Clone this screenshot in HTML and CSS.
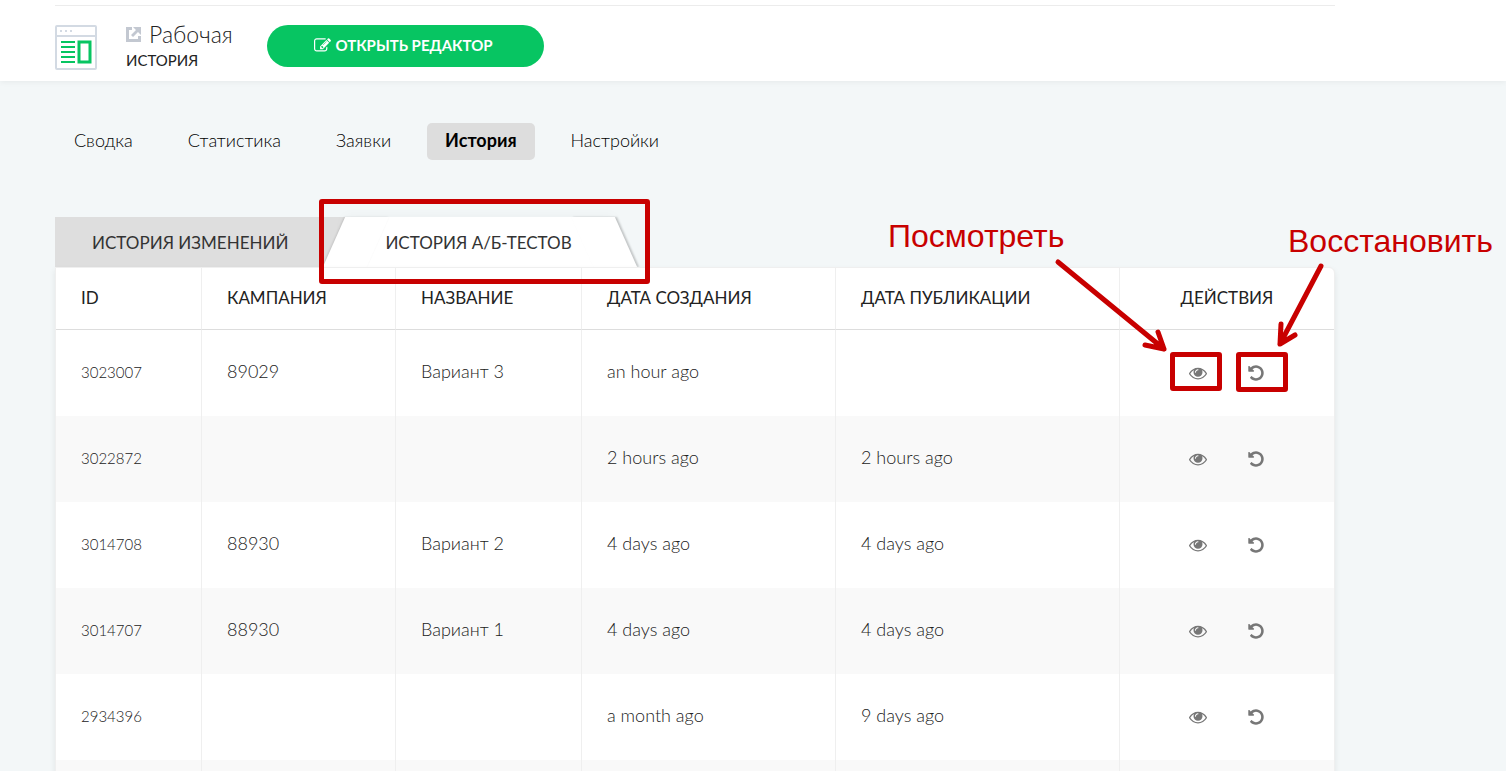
FILE: index.html
```
<!DOCTYPE html>
<html lang="ru">
<head>
    <meta charset="UTF-8">
    <title>История А/Б-тестов</title>
    <link rel="stylesheet" href="styles.css">
</head>
<body>
    <!-- общие иконки -->
    <svg class="sprite" aria-hidden="true">
        <symbol id="icon-eye" viewBox="0 0 1792 1792">
            <path d="M1664 960q-152-236-381-353 61 104 61 225 0 185-131.5 316.5t-316.5 131.5-316.5-131.5-131.5-316.5q0-121 61-225-229 117-381 353 133 205 333.5 326.5t434.5 121.5 434.5-121.5 333.5-326.5zm-720-384q0-20-14-34t-34-14q-125 0-214.5 89.5t-89.5 214.5q0 20 14 34t34 14 34-14 14-34q0-86 61-147t147-61q20 0 34-14t14-34zm848 384q0 34-20 69-140 230-376.5 368.5t-499.5 138.5-499.5-139-376.5-368q-20-35-20-69t20-69q140-229 376.5-368t499.5-139 499.5 139 376.5 368q20 35 20 69z"/>
        </symbol>
        <symbol id="icon-undo" viewBox="0 0 1792 1792">
            <path d="M1664 896q0 156-61 298t-164 245-245 164-298 61q-172 0-327-72.5t-264-204.5q-7-10-6.5-22.5t8.5-20.5l137-138q10-9 25-9 16 2 23 12 73 95 179 147t225 52q104 0 198.5-40.5t163.5-109.5 109.5-163.5 40.5-198.5-40.5-198.5-109.5-163.5-163.5-109.5-198.5-40.5q-98 0-188 35.5t-160 101.5l137 138q31 30 14 69-17 40-59 40h-448q-26 0-45-19t-19-45v-448q0-42 40-59 39-17 69 14l130 129q107-101 244.5-156.5t284.5-55.5q156 0 298 61t245 164 164 245 61 298z"/>
        </symbol>
    </svg>

    <header class="header">
        <div class="container header-inner">
            <svg class="page-icon" viewBox="0 0 42 45" aria-hidden="true">
                <rect x="1" y="1" width="40" height="43" rx="1" fill="#fff" stroke="#d3dae3" stroke-width="2"/>
                <path d="M1 11h40" stroke="#d3dae3" stroke-width="2"/>
                <path d="M5 6h2M10 6h2M15 6h2" stroke="#d3dae3" stroke-width="2"/>
                <path d="M6 17h14M6 22h14M6 27h14M6 32h14M6 37h14" stroke="#07c562" stroke-width="2"/>
                <rect x="24" y="17" width="11" height="20" fill="none" stroke="#07c562" stroke-width="3"/>
            </svg>
            <div class="page-name">
                <h1 class="page-title">
                    <a href="#" class="external-link" aria-label="Открыть страницу">
                        <svg viewBox="0 0 15 15" aria-hidden="true">
                            <path d="M6 0H0v15h15V9h-3v3H3V3h3z" fill="#c3c8d1"/>
                            <path d="M7 0h8v8l-3-3-5 5-2-2 5-5z" fill="#c3c8d1"/>
                        </svg>
                    </a>
                    Рабочая
                </h1>
                <p class="page-subtitle">ИСТОРИЯ</p>
            </div>
            <button type="button" class="editor-button">
                <svg viewBox="0 0 1792 1792" aria-hidden="true">
                    <path d="M888 1184l116-116-152-152-116 116v56h96v96h56zm440-720q-16-16-33 1l-350 350q-17 17-1 33t33-1l350-350q17-17 1-33zm80 594v190q0 119-84.5 203.5t-203.5 84.5h-832q-119 0-203.5-84.5t-84.5-203.5v-832q0-119 84.5-203.5t203.5-84.5h832q63 0 117 25 15 7 18 23 3 17-9 29l-49 49q-14 14-32 8-23-6-45-6h-832q-66 0-113 47t-47 113v832q0 66 47 113t113 47h832q66 0 113-47t47-113v-126q0-13 9-22l64-64q15-15 35-7t20 29zm-96-738l288 288-672 672h-288v-288zm444 132l-92 92-288-288 92-92q28-28 68-28t68 28l152 152q28 28 28 68t-28 68z"/>
                </svg>
                ОТКРЫТЬ РЕДАКТОР
            </button>
        </div>
    </header>

    <main class="container">
        <nav class="menu">
            <a href="#" class="menu-link">Сводка</a>
            <a href="#" class="menu-link">Статистика</a>
            <a href="#" class="menu-link">Заявки</a>
            <a href="#" class="menu-link active">История</a>
            <a href="#" class="menu-link">Настройки</a>
        </nav>

        <div class="tabs">
            <button type="button" class="tab">ИСТОРИЯ ИЗМЕНЕНИЙ</button>
            <button type="button" class="tab active"><span>ИСТОРИЯ А/Б-ТЕСТОВ</span></button>
        </div>

        <div class="card">
            <table class="history">
                <colgroup>
                    <col class="col-id">
                    <col class="col-campaign">
                    <col class="col-name">
                    <col class="col-created">
                    <col class="col-published">
                    <col class="col-actions">
                </colgroup>
                <thead>
                    <tr>
                        <th>ID</th>
                        <th>КАМПАНИЯ</th>
                        <th>НАЗВАНИЕ</th>
                        <th>ДАТА СОЗДАНИЯ</th>
                        <th>ДАТА ПУБЛИКАЦИИ</th>
                        <th class="center">ДЕЙСТВИЯ</th>
                    </tr>
                </thead>
                <tbody>
                    <tr>
                        <td class="id">3023007</td>
                        <td>89029</td>
                        <td>Вариант 3</td>
                        <td>an hour ago</td>
                        <td></td>
                        <td>
                            <div class="actions">
                                <button type="button" class="action" aria-label="Посмотреть"><svg><use href="#icon-eye"/></svg></button>
                                <button type="button" class="action" aria-label="Восстановить"><svg><use href="#icon-undo"/></svg></button>
                            </div>
                        </td>
                    </tr>
                    <tr>
                        <td class="id">3022872</td>
                        <td></td>
                        <td></td>
                        <td>2 hours ago</td>
                        <td>2 hours ago</td>
                        <td>
                            <div class="actions">
                                <button type="button" class="action" aria-label="Посмотреть"><svg><use href="#icon-eye"/></svg></button>
                                <button type="button" class="action" aria-label="Восстановить"><svg><use href="#icon-undo"/></svg></button>
                            </div>
                        </td>
                    </tr>
                    <tr>
                        <td class="id">3014708</td>
                        <td>88930</td>
                        <td>Вариант 2</td>
                        <td>4 days ago</td>
                        <td>4 days ago</td>
                        <td>
                            <div class="actions">
                                <button type="button" class="action" aria-label="Посмотреть"><svg><use href="#icon-eye"/></svg></button>
                                <button type="button" class="action" aria-label="Восстановить"><svg><use href="#icon-undo"/></svg></button>
                            </div>
                        </td>
                    </tr>
                    <tr>
                        <td class="id">3014707</td>
                        <td>88930</td>
                        <td>Вариант 1</td>
                        <td>4 days ago</td>
                        <td>4 days ago</td>
                        <td>
                            <div class="actions">
                                <button type="button" class="action" aria-label="Посмотреть"><svg><use href="#icon-eye"/></svg></button>
                                <button type="button" class="action" aria-label="Восстановить"><svg><use href="#icon-undo"/></svg></button>
                            </div>
                        </td>
                    </tr>
                    <tr>
                        <td class="id">2934396</td>
                        <td></td>
                        <td></td>
                        <td>a month ago</td>
                        <td>9 days ago</td>
                        <td>
                            <div class="actions">
                                <button type="button" class="action" aria-label="Посмотреть"><svg><use href="#icon-eye"/></svg></button>
                                <button type="button" class="action" aria-label="Восстановить"><svg><use href="#icon-undo"/></svg></button>
                            </div>
                        </td>
                    </tr>
                    <tr>
                        <td></td>
                        <td></td>
                        <td></td>
                        <td></td>
                        <td></td>
                        <td></td>
                    </tr>
                </tbody>
            </table>
        </div>
    </main>

    <!-- пометки поверх страницы -->
    <div class="notes">
        <div class="note-box note-box-tab"></div>
        <div class="note-box note-box-view"></div>
        <div class="note-box note-box-restore"></div>
        <span class="note-text note-text-view">Посмотреть</span>
        <span class="note-text note-text-restore">Восстановить</span>
        <svg class="note-arrows" aria-hidden="true">
            <path d="M1058 262L1164 349M1158 332L1164 349L1145 345"/>
            <path d="M1321 266L1280 344M1281 324L1280 344L1295 335"/>
        </svg>
    </div>
</body>
</html>
```

FILE: styles.css
```
* {
    margin: 0;
    padding: 0;
    box-sizing: border-box;
}

body {
    position: relative;
    height: 100vh;
    overflow: hidden;
    background: #f3f7f8;
    color: #222;
    font-family: Lato, "Open Sans", sans-serif;
    font-size: 18px;
    font-weight: 300;
}

button {
    border: none;
    background: none;
    font: inherit;
    color: inherit;
    cursor: pointer;
}

a {
    color: inherit;
    text-decoration: none;
}

.sprite {
    position: absolute;
    width: 0;
    height: 0;
}

.container {
    max-width: 1335px;
    padding-left: 55px;
}

/* шапка */
.header {
    padding-top: 5px;
    background: #fff;
    box-shadow: 0 1px 6px rgba(0, 0, 0, 0.06);
}

.header-inner {
    display: flex;
    align-items: center;
    height: 76px;
    padding-top: 6px;
    background: linear-gradient(#ececec, #ececec) 55px 0 / 100% 1px no-repeat;
}

.page-icon {
    width: 42px;
    height: 45px;
    margin-top: 2px;
}

.page-name {
    width: 141px;
    margin-left: 29px;
}

.page-title {
    display: flex;
    align-items: center;
    gap: 8px;
    font-size: 23px;
    line-height: 24px;
    font-weight: 300;
}

.external-link svg {
    display: block;
    width: 15px;
    height: 15px;
}

.page-subtitle {
    margin-top: 4px;
    font-size: 15px;
    line-height: 20px;
    font-weight: 400;
}

.editor-button {
    display: flex;
    align-items: center;
    justify-content: center;
    gap: 4px;
    width: 277px;
    height: 42px;
    padding: 0 4px 2px 0;
    border-radius: 21px;
    background: #07c562;
    color: #fff;
    font-size: 15px;
    font-weight: 700;
}

.editor-button svg {
    width: 17px;
    height: 17px;
    fill: #fff;
}

/* меню разделов */
.menu {
    display: flex;
    gap: 17px;
    padding-top: 42px;
}

.menu-link {
    padding: 0 19px 2px;
    border-radius: 5px;
    line-height: 35px;
    color: #000;
}

.menu-link.active {
    padding: 0 18px 2px;
    background: #ddd;
    font-weight: 700;
}

/* вкладки */
.tabs {
    display: flex;
    margin-top: 57px;
}

.tab {
    height: 50px;
    padding: 0 57px 0 37px;
    background: #dedede;
    color: #333;
    font-size: 17px;
    font-weight: 400;
}

.tab.active {
    position: relative;
    padding: 0 42px 0 40px;
    background: #fff;
    box-shadow: 0 0 12px rgba(0, 0, 0, 0.04);
}

.tab.active span {
    position: relative;
    z-index: 1;
}

.tab.active::before,
.tab.active::after {
    content: '';
    position: absolute;
    top: 0;
    width: 44px;
    height: 100%;
    background: #fff;
}

.tab.active::before {
    left: -11px;
    transform: skewX(-24deg);
    box-shadow: -1px 0 2px rgba(0, 0, 0, 0.12);
}

.tab.active::after {
    right: -12px;
    transform: skewX(24deg);
    box-shadow: 2px 0 2px rgba(0, 0, 0, 0.2);
}

/* таблица */
.card {
    position: relative;
    border: 1px solid #efefef;
    border-radius: 0 6px 0 0;
    background: #fff;
    box-shadow: 0 3px 6px rgba(0, 0, 0, 0.08);
}

.history {
    width: 100%;
    table-layout: fixed;
    border-collapse: separate;
    border-spacing: 0;
}

.col-id {
    width: 146px;
}

.col-campaign {
    width: 194px;
}

.col-name {
    width: 186px;
}

.col-created {
    width: 254px;
}

.col-published {
    width: 284px;
}

.history th,
.history td {
    padding: 0 25px 4px;
    border-right: 1px solid #efefef;
    text-align: left;
}

.history th:last-child,
.history td:last-child {
    border-right: none;
}

.history th {
    height: 62px;
    padding-bottom: 2px;
    border-bottom: 1px solid #ddd;
    font-size: 17px;
    font-weight: 400;
    white-space: nowrap;
}

.history th.center {
    text-align: center;
}

.history td {
    height: 86px;
}

.history td:last-child {
    padding-bottom: 0;
}

.history tbody tr:nth-child(even) {
    background: #f9f9f9;
}

.history .id {
    padding-bottom: 2px;
    font-size: 15px;
}

.actions {
    display: flex;
    justify-content: center;
    gap: 40px;
}

.action svg {
    display: block;
    width: 18px;
    height: 18px;
    fill: #777;
}

/* пометки */
.notes {
    position: absolute;
    top: 0;
    left: 0;
    width: 100%;
    height: 100%;
    pointer-events: none;
}

.note-box {
    position: absolute;
    border: 5px solid #c80000;
    border-radius: 3px;
}

.note-box-tab {
    top: 199px;
    left: 319px;
    width: 331px;
    height: 85px;
}

.note-box-view {
    top: 352px;
    left: 1170px;
    width: 52px;
    height: 39px;
}

.note-box-restore {
    top: 352px;
    left: 1236px;
    width: 52px;
    height: 40px;
}

.note-text {
    position: absolute;
    color: #c80000;
    font-family: "Liberation Sans", Arial, sans-serif;
    font-size: 32px;
    font-weight: 400;
    line-height: 36px;
}

.note-text-view {
    top: 218px;
    left: 888px;
}

.note-text-restore {
    top: 223px;
    left: 1288px;
}

.note-arrows {
    position: absolute;
    top: 0;
    left: 0;
    width: 100%;
    height: 100%;
    fill: none;
    stroke: #c80000;
    stroke-width: 5;
    stroke-linecap: round;
    stroke-linejoin: round;
}
```
